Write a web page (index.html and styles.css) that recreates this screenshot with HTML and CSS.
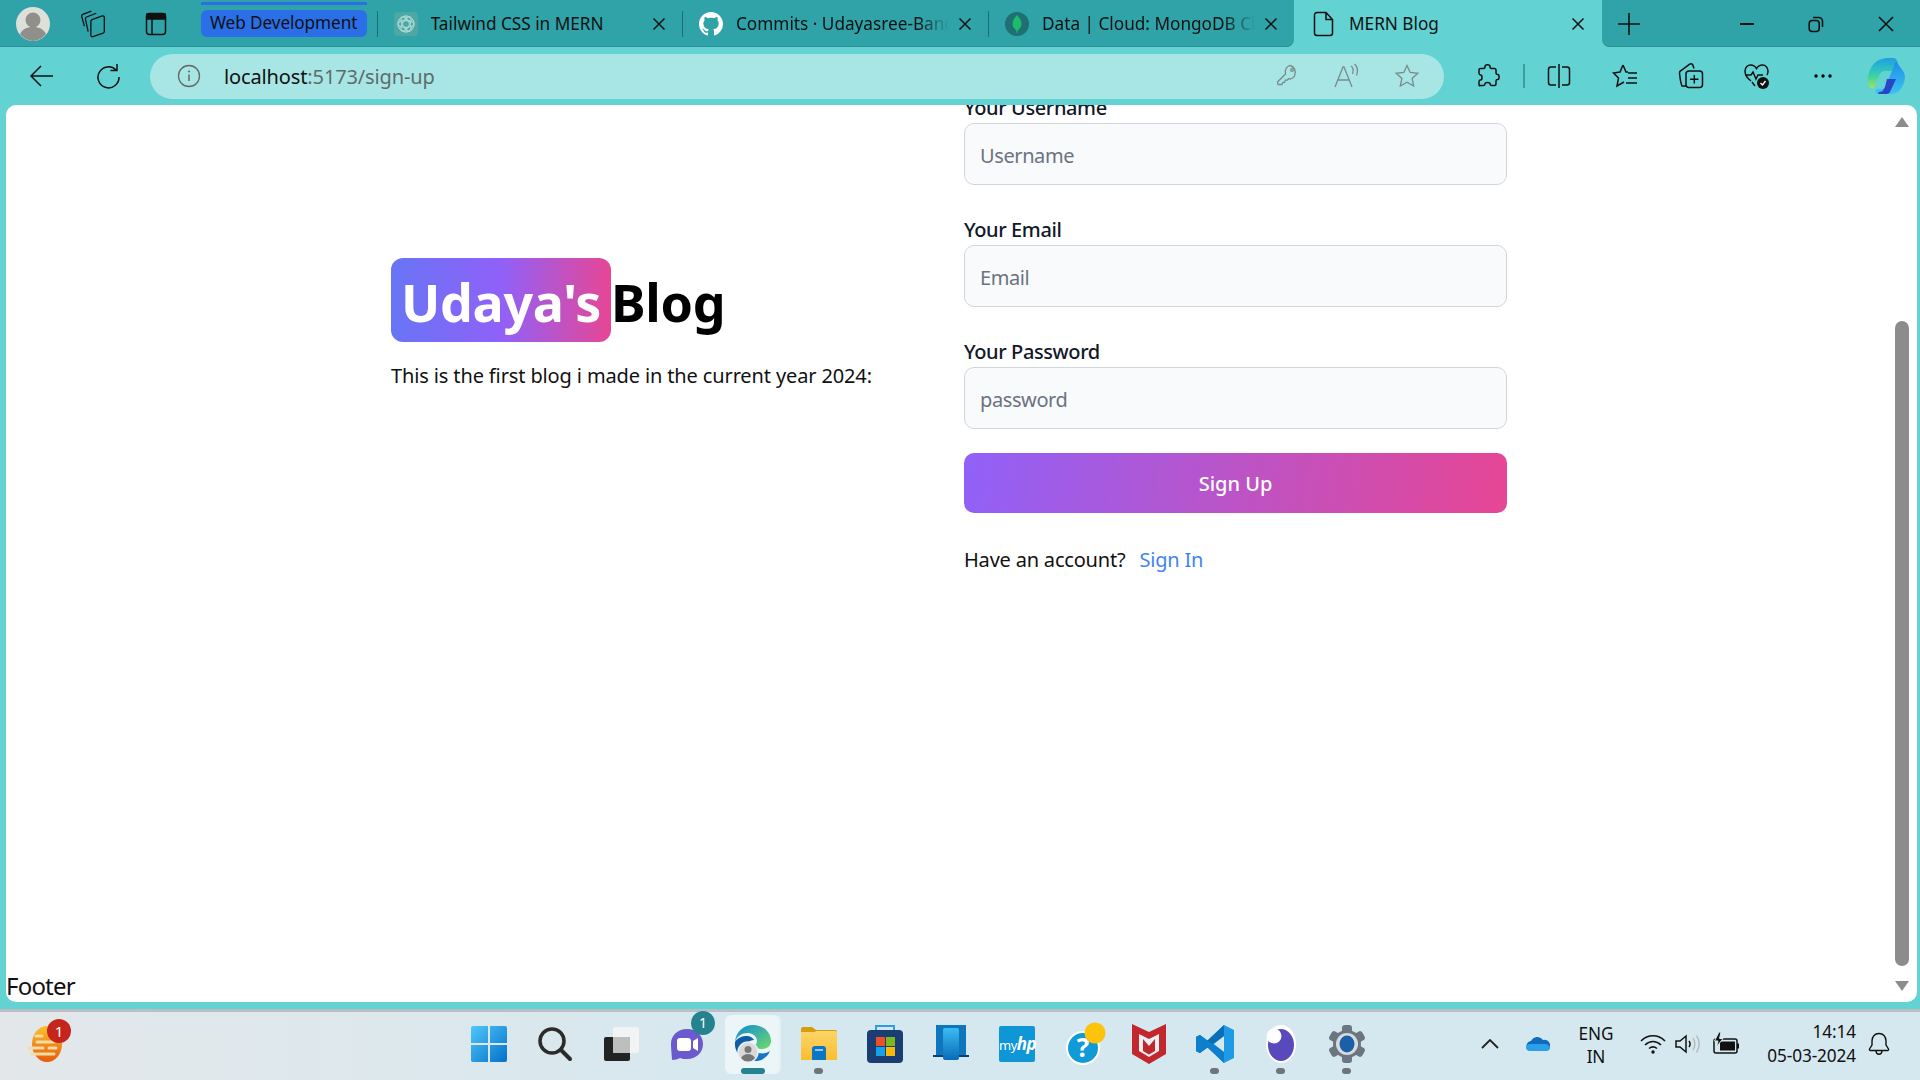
FILE: index.html
```html
<!DOCTYPE html>
<html lang="en">
<head>
  <meta charset="UTF-8" />
  <title>MERN Blog</title>
  <link rel="stylesheet" href="styles.css">
</head>
<body>
  <!-- tab strip -->
  <div class="strip">
    <div class="strip-left">
      <div class="avatar">
        <svg width="36" height="36" viewBox="0 0 36 36"><circle cx="18" cy="18" r="17" fill="#dfdfda"/><circle cx="18" cy="14" r="7.500" fill="#8f8f8c"/><path d="M5 28c3-6 8-7 13-7s10 1 13 7c-3 4-8 7-13 7s-10-3-13-7z" fill="#8f8f8c"/></svg>
      </div>
      <div class="strip-ctl first">
        <svg width="26" height="28" viewBox="1 1 24 26" class="line thin"><path d="M5 16 2.500 7c-.2-1 .2-1.600 1-2l8-3"/><path d="M8.500 21 6 9.500c-.2-1 .2-1.600 1-2l9-3.500"/><path d="M11 11.500c0-.8.4-1.300 1.100-1.600l9.500-3.400c1-.3 1.900.3 1.900 1.300v13c0 .8-.4 1.300-1.100 1.600l-9.500 3.400c-1 .3-1.900-.3-1.900-1.300z"/></svg>
      </div>
      <div class="strip-ctl">
        <svg width="24" height="26" viewBox="0 0 24 26" class="line"><rect x="2.500" y="2.500" width="19" height="21" rx="3"/><path d="M8 8v15"/><path d="M3 3h18v5H3z" fill="#111"/></svg>
      </div>
      <div class="group-pill">Web Development</div>
      <div class="tab-sep"></div>
      <div class="tab">
        <svg class="favicon" width="24" height="24" viewBox="0 0 24 24"><rect width="24" height="24" rx="3" fill="#4da7a4"/><g fill="none" stroke="#a6d8d4" stroke-width="1.300"><circle cx="12" cy="12" r="8"/><ellipse cx="12" cy="12" rx="8" ry="3.500" transform="rotate(60 12 12)"/><ellipse cx="12" cy="12" rx="8" ry="3.500" transform="rotate(-60 12 12)"/><ellipse cx="12" cy="12" rx="8" ry="3.500"/></g></svg>
        <span class="tab-title">Tailwind CSS in MERN</span>
        <svg class="tab-x" width="14" height="14" viewBox="0 0 14 14"><path d="M1.500 1.500l11 11M12.500 1.500l-11 11"/></svg>
      </div>
      <div class="tab-sep"></div>
      <div class="tab">
        <svg class="favicon" width="24" height="24" viewBox="0 0 16 16"><path fill="#fff" d="M8 0C3.580 0 0 3.580 0 8c0 3.540 2.290 6.530 5.470 7.590.4.070.55-.17.55-.38 0-.19-.01-.82-.01-1.490-2.010.37-2.530-.49-2.690-.94-.09-.23-.48-.94-.82-1.130-.28-.15-.68-.52-.01-.53.63-.01 1.080.58 1.230.82.720 1.210 1.870.87 2.330.66.070-.52.28-.87.510-1.070-1.780-.2-3.640-.89-3.640-3.950 0-.87.310-1.590.820-2.150-.08-.2-.36-1.020.08-2.120 0 0 .67-.21 2.200.82.640-.18 1.320-.27 2-.27s1.360.09 2 .27c1.530-1.040 2.200-.82 2.200-.82.440 1.100.16 1.920.08 2.120.51.560.82 1.270.82 2.150 0 3.070-1.870 3.750-3.650 3.950.29.250.54.730.54 1.480 0 1.070-.01 1.930-.01 2.200 0 .21.150.46.550.38A8.010 8.010 0 0 0 16 8c0-4.420-3.580-8-8-8z"/></svg>
        <span class="tab-title fade">Commits · Udayasree-Bandi</span>
        <svg class="tab-x" width="14" height="14" viewBox="0 0 14 14"><path d="M1.500 1.500l11 11M12.500 1.500l-11 11"/></svg>
      </div>
      <div class="tab-sep"></div>
      <div class="tab">
        <svg class="favicon" width="24" height="24" viewBox="0 0 24 24"><circle cx="12" cy="12" r="12" fill="#1f6f73"/><path d="M12 3c3 3 4.500 6 4.500 9 0 3-2 5-3.800 6.300L12.400 21h-.8l-.3-2.700C9.500 17 7.500 15 7.500 12c0-3 1.500-6 4.500-9z" fill="#1ebc6a"/></svg>
        <span class="tab-title fade">Data | Cloud: MongoDB Cloud</span>
        <svg class="tab-x" width="14" height="14" viewBox="0 0 14 14"><path d="M1.500 1.500l11 11M12.500 1.500l-11 11"/></svg>
      </div>
    </div>
    <div class="tab-active">
      <svg class="favicon" width="22" height="26" viewBox="0 0 22 26"><path d="M4 1.500h9l6.500 7V22a2.500 2.500 0 0 1-2.500 2.500H4A2.500 2.500 0 0 1 1.500 22V4A2.500 2.500 0 0 1 4 1.500zM13 1.500V8.500h6.500" fill="none" stroke="#111" stroke-width="1.500"/></svg>
      <span class="tab-title">MERN Blog</span>
      <svg class="tab-x" width="14" height="14" viewBox="0 0 14 14"><path d="M1.500 1.500l11 11M12.500 1.500l-11 11"/></svg>
    </div>
    <div class="strip-right">
      <svg class="new-tab" width="22" height="22" viewBox="0 0 22 22"><path d="M11 0v22M0 11h22"/></svg>
      <svg class="win-btn min" width="16" height="16" viewBox="0 0 16 16"><path d="M1 8h14"/></svg>
      <svg class="win-btn res" width="16" height="18" viewBox="0 0 16 18"><rect x="1.200" y="5.500" width="10" height="11" rx="3"/><path d="M5 2.500h5.500a4 4 0 0 1 4 4V12"/></svg>
      <svg class="win-btn cls" width="16" height="16" viewBox="0 0 16 16"><path d="M1 1l14 14M15 1 1 15"/></svg>
    </div>
  </div>

  <!-- toolbar -->
  <div class="toolbar">
    <div class="tool">
      <svg width="26" height="24" viewBox="0 0 26 24" class="line"><path d="M24 12H2M12 2 2 12l10 10"/></svg>
    </div>
    <div class="tool">
      <svg width="26" height="28" viewBox="0 0 26 28" class="line"><path d="M21 8a10.500 10.500 0 1 0 3 7M22 2v6.500h-6.500"/></svg>
    </div>
    <div class="address">
      <svg class="info" width="24" height="24" viewBox="0 0 24 24"><circle cx="12" cy="12" r="10.500" fill="none" stroke="#666" stroke-width="1.300"/><path d="M12 10.500V17" stroke="#666" stroke-width="1.500"/><circle cx="12" cy="7.500" r="1" fill="#666"/></svg>
      <span class="url">localhost<span class="url-dim">:5173/sign-up</span></span>
      <div class="addr-icons">
        <div class="addr-icon"><svg width="24" height="24" viewBox="0 0 24 24" class="dim"><path d="M14.500 2.500a7 7 0 0 1 1 13.500l-2-.3-1.300 1.500h-2l-.5 2-2 .3-.7 2H3L2.500 19l8-8a7 7 0 0 1 4-8.500z"/><circle cx="17" cy="7" r="1.300"/></svg></div>
        <div class="addr-icon"><svg width="28" height="26" viewBox="0 0 28 26" class="dim"><path d="M2 24 10 4h1l8 20M5 17h11M18 3c2 1.500 2.500 5 1.500 8M21.500 1c3 2.500 3.500 7 2 11.500"/></svg></div>
        <div class="addr-icon"><svg width="26" height="26" viewBox="0 0 26 26" class="dim"><path d="M13 2.500l3.200 7 7.600.8-5.700 5.100 1.600 7.600L13 19.200 6.300 23l1.600-7.600-5.700-5.100 7.600-.8z"/></svg></div>
      </div>
    </div>
    <div class="tool gap-left">
      <svg width="24" height="26" viewBox="0 0 24 26" class="line"><path d="M9 3.500c0-2.500 5-2.500 5 0 0 1 .3 2 1.500 2h3c1 0 1.500.6 1.500 1.500v3c0 1 1 1.500 1.700 1.500 1.800 0 1.800 5 0 5-.7 0-1.700.5-1.700 1.500v3c0 1-.6 1.500-1.500 1.500h-3c-1 0-1.500-1-1.500-1.700 0-1.800-5-1.800-5 0 0 .7-.5 1.700-1.500 1.700h-3C3.600 23 3 22.500 3 21.500v-3c0-1 1-1.500 1.500-1.500 2 0 2-5 0-5C4 12 3 11 3 10V7c0-1 .6-1.500 1.500-1.500h3C8.600 5.500 9 4.500 9 3.500z"/></svg>
    </div>
    <div class="tool-sep"></div>
    <div class="tool">
      <svg width="24" height="26" viewBox="0 0 24 26" class="line"><path d="M9 4H4a2.500 2.500 0 0 0-2.500 2.500v13A2.500 2.500 0 0 0 4 22h5M15 4h5a2.500 2.500 0 0 1 2.500 2.500v13A2.500 2.500 0 0 1 20 22h-5M12 1v24"/></svg>
    </div>
    <div class="tool">
      <svg width="26" height="26" viewBox="0 0 26 26" class="line"><path d="M11 2 8 9 1.500 10l5 5L5 23l7-4M11 2l3 7h2M16 10h9M16 15h9M14 20h11"/></svg>
    </div>
    <div class="tool">
      <svg width="26" height="28" viewBox="0 0 26 28" class="line"><path d="M8 24 4 24C3 22 2 16 1.500 11c0-1 .5-2 1.500-2.500L12 2c1.500-.5 2.500 0 3 1.500l1 3"/><rect x="8" y="9" width="16.500" height="16.500" rx="3"/><path d="M16.300 13v8.500M12 17.300h8.500"/></svg>
    </div>
    <div class="tool">
      <svg width="28" height="28" viewBox="0 0 28 28"><path d="M8 19C4 16 2 13 2 9c0-3.500 2.500-6 5.500-6 2.500 0 4.500 1 6 3.500C15 4 17 3 19.500 3 22.500 3 25 5.500 25 9c0 1.500-.3 2.800-1 4" fill="none" stroke="#111" stroke-width="1.500"/><path d="M2 13h6l2-3 3 7 2-4h5M9 20l3 4" fill="none" stroke="#111" stroke-width="1.500"/><circle cx="20" cy="21" r="6" fill="#111"/><path d="M17.500 21l2 2 3-4" fill="none" stroke="#fff" stroke-width="1.400"/></svg>
    </div>
    <div class="tool">
      <svg width="20" height="6" viewBox="0 0 20 6"><circle cx="3" cy="3" r="1.700"/><circle cx="10" cy="3" r="1.700"/><circle cx="17" cy="3" r="1.700"/></svg>
    </div>
    <div class="tool copilot">
      <svg width="38" height="38" viewBox="0 0 38 38">
        <defs>
          <linearGradient id="cpA" x1="0" y1="0" x2="0" y2="1"><stop offset="0" stop-color="#1f9fe6"/><stop offset=".6" stop-color="#39d3a6"/><stop offset="1" stop-color="#a8df5c"/></linearGradient>
          <linearGradient id="cpB" x1="0" y1="0" x2="0" y2="1"><stop offset="0" stop-color="#1f8fe8"/><stop offset="1" stop-color="#3cc4f0"/></linearGradient>
        </defs>
        <path d="M20 1h6c3 0 4 2 5 5l1 8H18c-3 0-5 2-6 5l-3 8c-1 3-3 5-5 4S0 26 1 20c1-8 6-15 11-17 3-1 5-2 8-2z" fill="url(#cpA)"/>
        <path d="M27 7c1-2 3-2 4 0l5 7c3 4 2 10 0 14-2 5-6 9-12 9H12c-3 0-4-2-3-4l1-1c2 0 5 1 7-1 3-2 4-6 5-10l5-12z" fill="url(#cpB)"/>
        <path d="M20 22h9l-6 13c-1 2-3 2-5 2h-7l1-2c3 0 5-2 6-5z" fill="#2b45c9"/>
      </svg>
    </div>
  </div>

  <!-- page -->
  <div class="frame">
    <div class="page">
      <main class="content">
        <div class="columns">
          <div class="intro">
            <div class="logo"><span class="logo-badge">Udaya's</span>Blog</div>
            <p class="intro-text">This is the first blog i made in the current year 2024:</p>
          </div>
          <form class="signup">
            <div class="field">
              <label for="username">Your Username</label>
              <input id="username" type="text" placeholder="Username">
            </div>
            <div class="field">
              <label for="email">Your Email</label>
              <input id="email" type="text" placeholder="Email">
            </div>
            <div class="field">
              <label for="password">Your Password</label>
              <input id="password" type="password" placeholder="password">
            </div>
            <button type="button" class="submit">Sign Up</button>
            <div class="have-account"><span>Have an account?</span><a href="#">Sign In</a></div>
          </form>
        </div>
        <footer class="footer">Footer</footer>
      </main>
      <div class="scrollbar">
        <div class="arrow-up"></div>
        <div class="track"><div class="thumb"></div></div>
        <div class="arrow-down"></div>
      </div>
    </div>
  </div>

  <!-- taskbar -->
  <div class="taskbar">
    <div class="weather">
      <svg width="36" height="36" viewBox="0 0 36 36">
        <defs><linearGradient id="sun" x1="0" y1="0" x2="0" y2="1"><stop offset="0" stop-color="#fbc22c"/><stop offset="1" stop-color="#e8590c"/></linearGradient></defs>
        <ellipse cx="19" cy="18" rx="15" ry="18" fill="url(#sun)"/>
        <g stroke="#f2dca4" stroke-width="3" stroke-linecap="round"><path d="M8 10h6M9 16h17M1 22h14M21 22h7M4 28h22"/></g>
      </svg>
      <span class="weather-badge">1</span>
    </div>
    <div class="apps">
      <div class="app">
        <svg width="36" height="36" viewBox="0 0 36 36"><defs><linearGradient id="win" x1="0" y1="0" x2="1" y2="1"><stop offset="0" stop-color="#4fc8fa"/><stop offset="1" stop-color="#0570c9"/></linearGradient></defs><path d="M2 0h15v17H0V2a2 2 0 0 1 2-2zM19 0h15a2 2 0 0 1 2 2v15H19zM0 19h17v17H2a2 2 0 0 1-2-2zM19 19h17v15a2 2 0 0 1-2 2H19z" fill="url(#win)"/></svg>
      </div>
      <div class="app">
        <svg width="36" height="36" viewBox="0 0 36 36"><circle cx="15" cy="15" r="12" fill="none" stroke="#2b2b2b" stroke-width="3.500"/><path d="M24 24l9 9" stroke="#2b2b2b" stroke-width="4" stroke-linecap="round"/></svg>
      </div>
      <div class="app">
        <svg width="36" height="36" viewBox="0 0 36 36"><rect x="1" y="11" width="26" height="24" rx="2" fill="#232323"/><rect x="10" y="1" width="26" height="26" rx="2" fill="#f2f3f3"/><rect x="10" y="11" width="17" height="16" fill="#bdbfbf"/></svg>
      </div>
      <div class="app">
        <svg width="36" height="36" viewBox="0 0 36 36"><path d="M18 3C8 3 2 10 2 18c0 5 1 13 1 16 3 0 6-1 8-2 2 1 5 1 7 1 10 0 16-7 16-15S28 3 18 3z" fill="#6a5acd"/><rect x="8" y="12" width="14" height="13" rx="3" fill="#fff"/><path d="M24 15l5-3v13l-5-3z" fill="#fff"/></svg>
        <span class="app-badge">1</span>
      </div>
      <div class="app app-current">
        <svg width="38" height="40" viewBox="0 0 38 40">
          <defs><linearGradient id="edgeA" x1="0" y1="0" x2="1" y2="1"><stop offset="0" stop-color="#0f8ad8"/><stop offset="1" stop-color="#6fdc6b"/></linearGradient></defs>
          <path d="M1 18C2 7 10 1 19 1c11 0 18 8 18 16 0 5-4 8-9 8-4 0-7-1-7-3 0-1 2-2 2-5 0-4-4-8-9-8C8 9 3 12 1 18z" fill="url(#edgeA)"/>
          <path d="M1 18c3-5 8-6 12-6 3 0 6 2 7 4-5 0-8 4-8 9 0 6 4 11 10 12C10 38 0 30 1 18z" fill="#0d5ca8"/>
          <path d="M21 37c6 0 12-3 15-10-3 2-7 3-11 2-3-1-5-2-6-4-1 5 0 9 2 12z" fill="#1276c9"/>
          <circle cx="14" cy="28" r="10" fill="#d8d8d8" stroke="#e8f0f3" stroke-width="1.500"/><circle cx="14" cy="25.500" r="3.500" fill="#777"/><path d="M7 34c2-3 4-4 7-4s5 1 7 4c-2 2.500-4 3.500-7 3.500s-5-1-7-3.500z" fill="#777"/>
        </svg>
        <span class="indicator wide"></span>
      </div>
      <div class="app">
        <svg width="36" height="36" viewBox="0 0 36 36"><defs><linearGradient id="fold" x1="0" y1="0" x2="0" y2="1"><stop offset="0" stop-color="#fcd56a"/><stop offset="1" stop-color="#fbbd2e"/></linearGradient></defs><path d="M0 3a2 2 0 0 1 2-2h9l4 3h19a2 2 0 0 1 2 2v6H0z" fill="#d99a0b"/><path d="M0 6h13l3-1h18a2 2 0 0 1 2 2v27H0z" fill="url(#fold)"/><path d="M11 34V23a3 3 0 0 1 3-3h8a3 3 0 0 1 3 3v11z" fill="#0d76c4"/><path d="M14 24h8" stroke="#bfe2f7" stroke-width="1.500"/></svg>
        <span class="indicator"></span>
      </div>
      <div class="app">
        <svg width="36" height="40" viewBox="0 0 36 40"><path d="M9 8V2h18v6" fill="none" stroke="#2c9fe0" stroke-width="2"/><rect y="6" width="36" height="33" rx="4" fill="#1a3e74"/><rect x="9" y="13" width="9" height="9" fill="#ef4f24"/><rect x="19" y="13" width="9" height="9" fill="#7db81e"/><rect x="9" y="23" width="9" height="9" fill="#16a2e6"/><rect x="19" y="23" width="9" height="9" fill="#fab80b"/></svg>
      </div>
      <div class="app">
        <svg width="36" height="40" viewBox="0 0 36 40"><defs><linearGradient id="ph" x1="0" y1="0" x2="0" y2="1"><stop offset="0" stop-color="#38bdf3"/><stop offset="1" stop-color="#0a6bb8"/></linearGradient></defs><path d="M3 1h30v30H3z" fill="#0f75bd"/><path d="M0 31h36v2H0z" fill="#083f72"/><rect x="10" y="4" width="16" height="32" rx="2" fill="url(#ph)"/></svg>
      </div>
      <div class="app">
        <div class="myhp">my<i>hp</i></div>
      </div>
      <div class="app">
        <svg width="46" height="44" viewBox="0 0 46 44"><circle cx="23" cy="26" r="17" fill="#fff"/><circle cx="23" cy="26" r="15" fill="#109bd6"/><text x="23" y="35" class="help-mark">?</text><circle cx="35" cy="11" r="10.500" fill="#fcc30a"/></svg>
      </div>
      <div class="app">
        <svg width="34" height="40" viewBox="0 0 34 40"><path d="M0 0l17 8 17-8v30L17 40 0 30z" fill="#c1272d"/><path d="M7 10l10 5 10-5v17l-10 6-10-6z" fill="#e9eef0"/><path d="M11 15v12l6 3.500 6-3.500V15l-6 7z" fill="#c1272d"/></svg>
      </div>
      <div class="app">
        <svg width="38" height="38" viewBox="0 0 38 38"><path d="M28 0l10 5v28l-10 5-17-16-7 6-4-2V12l4-2 7 6zM28 11l-10 8 10 8z" fill="#1f9be6"/><path d="M4 10l7 6L28 0v11L4 28l-4-2V12z" fill="#0a6fb8"/><path d="M0 12l4-2 24 17v11L11 22l-7 6-4-2z" fill="#0e7fcc"/></svg>
        <span class="indicator"></span>
      </div>
      <div class="app">
        <svg width="32" height="40" viewBox="0 0 32 40"><ellipse cx="16" cy="20" rx="15" ry="19" fill="#fff"/><ellipse cx="16" cy="21" rx="13" ry="16" fill="#5a48bd"/><circle cx="9" cy="12" r="7.500" fill="#fff"/></svg>
        <span class="indicator"></span>
      </div>
      <div class="app">
        <svg width="38" height="40" viewBox="0 0 38 40"><g fill="#6b7680"><circle cx="19" cy="20" r="14"/><rect x="14" y="1" width="10" height="38" rx="3"/><rect x="14" y="1" width="10" height="38" rx="3" transform="rotate(60 19 20)"/><rect x="14" y="1" width="10" height="38" rx="3" transform="rotate(-60 19 20)"/></g><circle cx="19" cy="20" r="11" fill="#d9dcde"/><ellipse cx="19" cy="20" rx="7.500" ry="8.500" fill="#1a5fa8"/></svg>
        <span class="indicator"></span>
      </div>
    </div>
    <div class="tray">
      <svg class="tray-chevron" width="18" height="10" viewBox="0 0 18 10"><path d="M1 9l8-8 8 8" fill="none" stroke="#222" stroke-width="1.800"/></svg>
      <svg class="tray-cloud" width="24" height="16" viewBox="0 0 24 16"><path d="M6 15a5 5 0 0 1-1-10 7 7 0 0 1 12-1 5 5 0 0 1 3 11z" fill="#0f6cbd"/><path d="M4 15c-3 0-4-2-4-3.500S1 8 4 8h14c4 0 6 2 6 4s-2 3-4 3z" fill="#2aa0ea"/></svg>
      <div class="lang"><span>ENG</span><span>IN</span></div>
      <div class="tray-icons">
        <svg width="26" height="20" viewBox="0 0 26 20"><g fill="none" stroke="#111" stroke-width="1.600"><path d="M1 7c7-7 17-7 24 0M5 11c5-4.500 11-4.500 16 0M9 14.500c2.500-2 5.500-2 8 0"/></g><circle cx="13" cy="18" r="1.700" fill="#111"/></svg>
        <svg width="26" height="20" viewBox="0 0 26 20"><path d="M1 7v6h4l6 5V2L5 7z" fill="none" stroke="#111" stroke-width="1.500"/><path d="M14 7c1.500 2 1.500 4 0 6" fill="none" stroke="#111" stroke-width="1.500"/><path d="M18 4c2.500 4 2.500 8 0 12M21.500 1.500c3.500 5.500 3.500 11.500 0 17" fill="none" stroke="#aeb5b8" stroke-width="1.300"/></svg>
        <svg class="tray-batt" width="26" height="24" viewBox="0 0 26 24"><path d="M3 7h19a2 2 0 0 1 2 2v10a2 2 0 0 1-2 2H3a2 2 0 0 1-2-2V9a2 2 0 0 1 2-2z" fill="none" stroke="#111" stroke-width="1.500"/><rect x="7" y="9.500" width="15" height="9" fill="#111"/><rect x="24" y="11.500" width="2" height="5" fill="#111"/><path d="M6 0 1.500 9H5l-1.500 6L10 6.500H6.500L8 0z" fill="#111" stroke="#d6e8ef" stroke-width="1"/></svg>
      </div>
      <div class="clock"><span>14:14</span><span>05-03-2024</span></div>
      <svg class="bell" width="22" height="24" viewBox="0 0 22 24"><path d="M11 1.500c-4.500 0-7 3.500-7 7.500v4l-2.500 4c-.3.700 0 1.500 1 1.500h17c1 0 1.300-.8 1-1.500L18 13V9c0-4-2.500-7.500-7-7.500zM8 19c.2 2 1.400 3.300 3 3.300s2.800-1.300 3-3.300" fill="none" stroke="#111" stroke-width="1.400"/></svg>
    </div>
  </div>
</body>
</html>
```

FILE: styles.css
```css
* { box-sizing: border-box; }
html, body { height: 100%; }
body {
  margin: 0;
  width: 1920px;
  height: 1080px;
  overflow: hidden;
  display: flex;
  flex-direction: column;
  font-family: "Noto Sans", "Open Sans", sans-serif;
  color: #111;
  background: #62d2d3;
}
.line { fill: none; stroke: #111; stroke-width: 1.5; }
.thin { stroke-width: 1.2; }
.dim { fill: none; stroke: #7b8a8a; stroke-width: 1.3; }

/* tab strip */
.strip { display: flex; height: 47px; flex: none; }
.strip-left {
  display: flex;
  align-items: center;
  width: 1294px;
  height: 47px;
  background: #2fa3a8;
  border-bottom-right-radius: 8px;
  box-shadow: inset 0 -1px 0 #2a8f94;
}
.avatar { width: 36px; height: 36px; margin-left: 15px; }
.strip-ctl { width: 63px; display: flex; justify-content: center; }
.strip-ctl.first { margin-left: 11px; }
.group-pill {
  width: 166px;
  height: 27px;
  margin-left: 13px;
  margin-right: 10px;
  position: relative;
  background: #2a6fe8;
  border-radius: 6px;
  font-size: 17.2px;
  line-height: 26px;
  text-align: center;
  letter-spacing: -0.1px;
  white-space: nowrap;
  flex: none;
}
.group-pill::before {
  content: "";
  position: absolute;
  left: 0;
  right: 0;
  top: -8px;
  height: 3px;
  background: #2a6fe8;
}
.tab-sep { width: 1px; height: 26px; background: #1c6f73; flex: none; }
.tab {
  display: flex;
  align-items: center;
  width: 305px;
  padding-left: 16px;
  padding-right: 13px;
}
.favicon { flex: none; margin-right: 13px; }
.tab-title {
  flex: 1;
  min-width: 0;
  white-space: nowrap;
  overflow: hidden;
  font-size: 17.2px;
  letter-spacing: 0;
}
.fade {
  -webkit-mask-image: linear-gradient(to right, #000 85%, transparent 100%);
  mask-image: linear-gradient(to right, #000 85%, transparent 100%);
}
.tab-x { flex: none; margin-left: 9px; margin-right: 3px; fill: none; stroke: #111; stroke-width: 1.5; }
.tab-active {
  display: flex;
  align-items: center;
  width: 308px;
  padding-left: 19px;
  padding-right: 14px;
  border-radius: 10px 10px 0 0;
  background: #62d2d3;
}
.tab-active .favicon { margin-right: 14px; }
.strip-right {
  flex: 1;
  display: flex;
  align-items: center;
  background: #2fa3a8;
  border-bottom-left-radius: 8px;
  box-shadow: inset 0 -1px 0 #2a8f94;
}
.new-tab { margin-left: 16px; fill: none; stroke: #111; stroke-width: 1.6; }
.win-btn { fill: none; stroke: #111; stroke-width: 1.6; }
.min { margin-left: 99px; stroke-width: 2; }
.res { margin-left: 53px; }
.cls { margin-left: 54px; }

/* toolbar */
.toolbar { display: flex; align-items: center; height: 58px; flex: none; padding-left: 9px; }
.tool { width: 66px; height: 44px; flex: none; display: flex; align-items: center; justify-content: center; }
.address {
  display: flex;
  align-items: center;
  width: 1294px;
  height: 45px;
  margin-left: 9px;
  padding-left: 27px;
  background: #a7e6e5;
  border-radius: 23px;
  flex: none;
}
.info { flex: none; margin-right: 23px; }
.url { font-size: 20px; letter-spacing: -0.13px; color: #111; }
.url-dim { color: #5f6b6b; }
.addr-icons { margin-left: auto; display: flex; padding-right: 7px; }
.addr-icon { width: 60px; display: flex; justify-content: center; }
.gap-left { margin-left: 11px; }
.tool-sep { width: 2px; height: 24px; background: #3f9c9f; flex: none; margin: 0 1px 0 2px; }
.copilot { margin-left: -3px; }

/* page */
.frame { flex: none; height: 904px; padding: 0 3px 7px 6px; }
.page {
  display: flex;
  height: 897px;
  background: #fff;
  border-radius: 10px;
  overflow: hidden;
}
.content { flex: 1; display: flex; flex-direction: column; min-width: 0; }
.columns {
  flex: 1;
  display: grid;
  grid-template-columns: 573px 543px;
  padding-left: 385px;
}
.intro { padding-top: 153px; }
.logo {
  display: flex;
  align-items: flex-start;
  height: 84px;
  font-size: 52px;
  line-height: 88px;
  font-weight: 700;
  color: #000;
  letter-spacing: -0.3px;
}
.logo-badge {
  width: 220px;
  height: 84px;
  text-align: center;
  color: #fff;
  border-radius: 12px;
  background: linear-gradient(to right, #6875f5, #9061f9, #e74694);
}
.intro-text { margin: 19px 0 0; font-size: 20px; line-height: 30px; letter-spacing: -0.13px; }
.signup { margin-top: -10px; display: flex; flex-direction: column; }
.field { display: flex; flex-direction: column; gap: 3px; margin-bottom: 32px; }
.field:nth-child(3) { margin-bottom: 24px; }
.field label { font-size: 20px; line-height: 25px; font-weight: 500; letter-spacing: -0.4px; color: #111827; }
.field input {
  height: 62px;
  padding: 2px 15px 0;
  background: #f9fafb;
  border: 1px solid #d1d5db;
  border-radius: 10px;
  font: inherit;
  font-size: 20px;
  letter-spacing: -0.4px;
}
.field input::placeholder { color: #6b7280; opacity: 1; }
.submit {
  height: 60px;
  border: 0;
  border-radius: 10px;
  background: linear-gradient(100deg, #9061f9, #e74694);
  color: #fff;
  font: inherit;
  font-size: 20px;
  font-weight: 500;
}
.have-account { display: flex; gap: 14px; margin-top: 32px; font-size: 20px; line-height: 30px; letter-spacing: -0.2px; }
.have-account a { color: #3f83f8; text-decoration: none; }
.footer { font-size: 24px; line-height: 32px; letter-spacing: -0.8px; flex: none; }

.scrollbar { width: 22px; flex: none; display: flex; flex-direction: column; align-items: center; padding: 12px 8px 11px 0; }
.arrow-up, .arrow-down { width: 0; height: 0; border-left: 7px solid transparent; border-right: 7px solid transparent; flex: none; }
.arrow-up { border-bottom: 10px solid #8c8c8c; }
.arrow-down { border-top: 10px solid #8c8c8c; }
.track { flex: 1; width: 100%; padding: 194px 0 15px; }
.thumb { width: 100%; height: 100%; background: #8c8c8c; border-radius: 7px; }

/* taskbar */
.taskbar {
  flex: 1;
  display: flex;
  align-items: center;
  padding-bottom: 4px;
  border-top: 3px solid #b9bfc2;
  background: linear-gradient(to right, #e3e7ea, #d6e8ef 40%, #d6e8ef);
}
.weather { position: relative; width: 36px; height: 36px; margin-left: 28px; margin-right: 392px; flex: none; }
.weather-badge {
  position: absolute;
  left: 19px;
  top: -7px;
  width: 24px;
  height: 24px;
  border-radius: 50%;
  background: #c4261d;
  color: #fff;
  font-size: 15px;
  line-height: 24px;
  text-align: center;
}
.apps { display: flex; align-items: center; flex: none; }
.app { position: relative; width: 66px; height: 60px; display: flex; align-items: center; justify-content: center; }
.app-current::before {
  content: "";
  position: absolute;
  left: 5px;
  right: 7px;
  top: 1px;
  bottom: 0;
  background: rgba(255, 255, 255, 0.55);
  border-radius: 6px;
  box-shadow: 2px 0 0 rgba(255, 255, 255, 0.4);
}
.app-current svg { position: relative; }
.app-badge {
  position: absolute;
  left: 37px;
  top: -3px;
  width: 24px;
  height: 24px;
  border-radius: 50%;
  background: #25838f;
  color: #fff;
  font-size: 14px;
  line-height: 24px;
  text-align: center;
}
.indicator {
  position: absolute;
  left: 28px;
  bottom: 0;
  width: 9px;
  height: 6px;
  border-radius: 3px;
  background: #6e7478;
}
.indicator.wide { left: 21px; width: 24px; background: #25838f; }
.myhp {
  width: 36px;
  height: 36px;
  background: #0f96d6;
  border-radius: 2px;
  color: #fff;
  font-size: 13px;
  line-height: 36px;
  text-align: center;
  letter-spacing: -0.5px;
}
.myhp i { font-size: 17px; font-weight: 700; }
.help-mark { font: 700 26px "Noto Sans", sans-serif; fill: #fff; text-anchor: middle; }
.tray { flex: 1; display: flex; align-items: center; }
.tray-chevron { margin-left: 101px; flex: none; }
.tray-cloud { margin-left: 27px; flex: none; }
.lang {
  width: 50px;
  margin-left: 21px;
  padding-top: 1px;
  display: flex;
  flex-direction: column;
  align-items: center;
  font-size: 17.2px;
  line-height: 23px;
  letter-spacing: -0.1px;
}
.tray-icons { display: flex; align-items: center; gap: 9px; margin-left: 19px; }
.tray-batt { margin-left: 3px; }
.clock {
  width: 117px;
  display: flex;
  flex-direction: column;
  align-items: flex-end;
  font-size: 17.2px;
  line-height: 24px;
  letter-spacing: -0.1px;
}
.bell { margin-left: 12px; flex: none; }
```
